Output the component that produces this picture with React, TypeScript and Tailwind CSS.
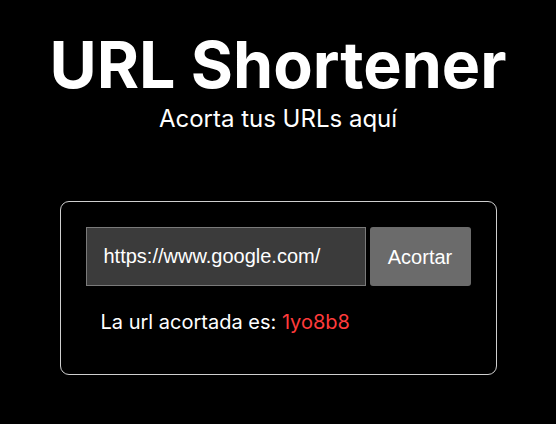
import React, { useState } from 'react';

export default function App() {
  const [url, setUrl] = useState('https://www.google.com/');

  return (
    <div className="min-h-screen bg-black text-white font-['Inter',sans-serif] flex flex-col items-center">
      <h1 className="mt-[27px] text-[64.5px] font-bold leading-[1.2]">URL Shortener</h1>
      <p className="text-[24px] leading-[1.2] mt-[1px]">Acorta tus URLs aquí</p>

      <div className="mt-[67px] w-[437px] h-[174px] border border-[#cfcfcf] rounded-[9px] px-[25px] pt-[25px]">
        <div className="flex gap-[4px]">
          <input
            value={url}
            onChange={(e) => setUrl(e.target.value)}
            className="w-[280px] h-[59px] bg-[#3b3b3b] border border-[#7a7a7a] px-[17px] text-[20px] text-white font-['Liberation_Sans',Arial,sans-serif] outline-none"
          />
          <button className="w-[101px] h-[59px] bg-[#6b6b6b] rounded-[3px] text-[20px] text-white font-['Liberation_Sans',Arial,sans-serif]">
            Acortar
          </button>
        </div>
        <p className="mt-[21px] ml-[15px] text-[20px] text-left">
          La url acortada es: <span className="text-[#ff3b3b]">1yo8b8</span>
        </p>
      </div>
    </div>
  );
}
